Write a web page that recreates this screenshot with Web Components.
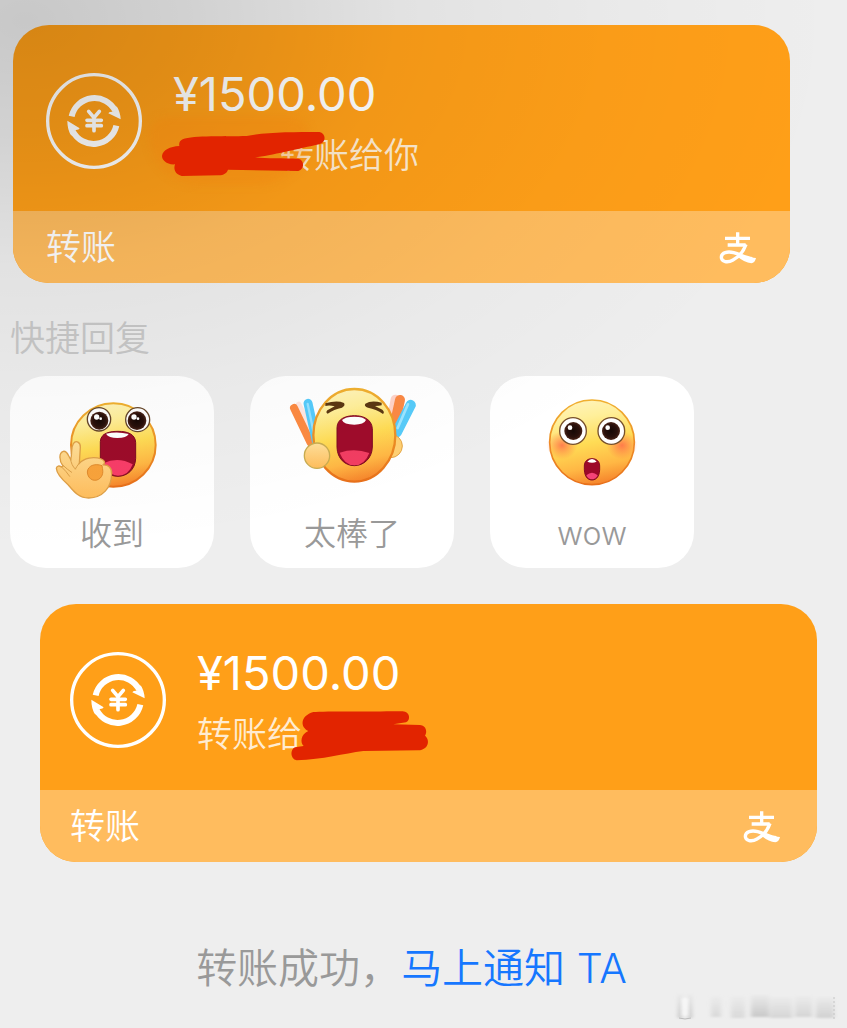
<!DOCTYPE html>
<html lang="zh-CN">
<head>
<meta charset="utf-8">
<meta name="viewport" content="width=device-width, initial-scale=1">
<title>转账</title>
<style>
body {
  margin: 0;
  background-color: #eee;
  font-family: Inter, "Noto Sans CJK SC", sans-serif;
}
</style>
</head>
<body>
<chat-page>
  <transfer-card amount="¥1500.00"><ink-mark shape="long"></ink-mark>转账给你</transfer-card>
  <quick-replies heading="快捷回复">
    <reply-option face="ok">收到</reply-option>
    <reply-option face="cheer">太棒了</reply-option>
    <reply-option face="wow">wow</reply-option>
  </quick-replies>
  <transfer-card sent amount="¥1500.00">转账给<ink-mark shape="short"></ink-mark></transfer-card>
  <transfer-notice action="马上通知 TA">转账成功，</transfer-notice>
</chat-page>

<script>
function makeTemplate(html) {
  const template = document.createElement("template");
  template.innerHTML = html;
  return template;
}

const pageTemplate = makeTemplate(`
<style>
:host {
  display: block;
  position: relative;
  box-sizing: border-box;
  min-height: 100vh;
  overflow: hidden;
}
main {
  display: flex;
  flex-direction: column;
  padding: 25px 0 30px;
}
/* soft shadow falling over the top left corner */
#shade {
  position: absolute;
  inset: 0;
  pointer-events: none;
  background: radial-gradient(ellipse 96% 52% at 3% 2%, rgba(0, 0, 0, .16), rgba(0, 0, 0, .12) 20%, rgba(0, 0, 0, .05) 46%, rgba(0, 0, 0, .02) 72%, transparent);
}
#smudge {
  position: absolute;
  right: 4px;
  bottom: 6px;
  pointer-events: none;
}
</style>
<main><slot></slot></main>
<div id="shade"></div>
<svg id="smudge" width="172" height="30" viewBox="0 0 172 30" aria-hidden="true">
  <defs>
    <filter id="soft" x="-20%" y="-20%" width="140%" height="140%"><feGaussianBlur stdDeviation="2 1"/></filter>
    <linearGradient id="down" x1="0" y1="0" x2="0" y2="1">
      <stop offset="0" stop-color="#c4c4c4" stop-opacity=".1"/>
      <stop offset="1" stop-color="#c4c4c4"/>
    </linearGradient>
  </defs>
  <g filter="url(#soft)" fill="url(#down)">
    <rect x="7" y="2" width="4" height="24"/>
    <rect x="17" y="2" width="4" height="24"/>
    <rect x="40" y="4" width="10" height="21" opacity=".5"/>
    <rect x="60" y="4" width="14" height="22" opacity=".5"/>
    <rect x="80" y="3" width="18" height="22" opacity=".9"/>
    <rect x="99" y="5" width="22" height="21" opacity=".6"/>
    <rect x="124" y="4" width="17" height="21" opacity=".6"/>
    <rect x="145" y="5" width="18" height="21" opacity=".7"/>
  </g>
  <path d="M8 26q6 2 12 0" stroke="#bbb" fill="none"/>
  <path d="M11 6h6v18h-6z" fill="#fff" opacity=".7" filter="url(#soft)"/>
  <path d="M163 5v22" stroke="#c4c4c4" stroke-dasharray="2 2"/>
</svg>
`);

class ChatPage extends HTMLElement {
  constructor() {
    super();
    this.attachShadow({ mode: "open" }).appendChild(pageTemplate.content.cloneNode(true));
  }
}

const cardTemplate = makeTemplate(`
<style>
:host {
  --start: 33px;
  --end: 33px;
  display: block;
  margin: 0 57px 0 13px;
  border-radius: 36px;
  overflow: hidden;
  background-color: #ff9f18;
  color: #fff;
}
:host([sent]) {
  --start: 30px;
  --end: 36px;
  margin: 36px 30px 0 40px;
}
#main {
  display: flex;
  align-items: flex-start;
  gap: 31px;
  padding: 40px var(--end) 34px var(--start);
}
#coin {
  flex: none;
  margin-top: 8px;
}
#amount {
  font-size: 47px;
  line-height: 58px;
}
#note {
  display: flex;
  margin-top: 10px;
  font-size: 35px;
  line-height: 44px;
  font-weight: 350;
  color: #ffecd1;
  white-space: nowrap;
}
#foot {
  display: flex;
  align-items: center;
  justify-content: space-between;
  padding: 0 var(--end) 0 var(--start);
  background-color: #ffbc5e;
  font-size: 35px;
  font-weight: 350;
  line-height: 72px;
}
#foot svg {
  margin-top: 2px;
}
</style>
<div id="main">
  <svg id="coin" width="96" height="96" viewBox="90 36 288 288" fill="none" stroke="#fff" aria-hidden="true">
    <circle cx="234" cy="180" r="139" stroke-width="10"/>
    <path d="M167 166A70 70 0 0 1 298 150" stroke-width="18"/>
    <path d="M301 194A70 70 0 0 1 170 210" stroke-width="18"/>
    <path d="M302 136Q313 153 314 175L277 157Q279 151 291 153Z" fill="#fff" stroke="none"/>
    <path d="M166 224Q154 207 154 179L191 202Q189 208 177 207Z" fill="#fff" stroke="none"/>
    <path d="M218 151L234 170L250 151M213 178H256M213 194H256M234 170V209" stroke-width="11" stroke-linecap="round"/>
  </svg>
  <div>
    <div id="amount"></div>
    <div id="note"><slot></slot></div>
  </div>
</div>
<div id="foot">
  <span>转账</span>
  <svg width="38" height="34" viewBox="90 62 114 102" fill="none" stroke="#fff" role="img" aria-label="支付宝">
    <path d="M108 84H183M146 66V103M116 104H170" stroke-width="10"/>
    <path d="M171 102C164 122 149 140 132 149C116 158 97 155 97 141C97 127 115 122 134 127C154 132 171 143 190 145" stroke-width="10"/>
    <path d="M150 131Q172 142 201 143Q198 157 187 159Q166 157 144 138Z" fill="#fff" stroke="none"/>
  </svg>
</div>
`);

class TransferCard extends HTMLElement {
  constructor() {
    super();
    const shadow = this.attachShadow({ mode: "open" });
    shadow.appendChild(cardTemplate.content.cloneNode(true));
    this.amountEl = shadow.getElementById("amount");
  }

  attributeChangedCallback(name, oldVal, newVal) {
    this.amountEl.textContent = newVal;
  }

  static get observedAttributes() {
    return ["amount"];
  }
}

// hand-drawn strokes hiding a name
const inks = {
  long: `<svg width="165" height="46" viewBox="483 363 495 138">
    <path d="M548 388C580 375 680 380 740 378C800 366 880 366 958 366C978 370 980 396 958 403C900 415 810 438 765 442C800 446 850 445 895 446C914 450 914 478 895 483L684 479C680 490 672 495 655 496L545 498C525 492 520 478 525 463C500 465 486 450 486 438C488 420 510 410 538 408C536 398 540 392 548 388Z"/>
  </svg>`,
  short: `<svg width="140" height="51" viewBox="330 207 420 153">
    <path d="M400 213C430 210 600 212 668 211C690 212 693 238 678 244L640 250L720 252C740 254 742 275 735 284C750 296 748 325 715 328L550 330C490 338 430 355 350 358C330 354 330 325 345 319L371 315C360 305 362 280 385 270C360 258 360 225 400 213Z"/>
  </svg>`
};

class InkMark extends HTMLElement {
  constructor() {
    super();
    this.attachShadow({ mode: "open" });
  }

  connectedCallback() {
    this.shadowRoot.innerHTML = `
    <style>
    :host {
      position: relative;
      z-index: 1;
      display: block;
      width: 106px;
      height: 44px;
    }
    svg {
      position: absolute;
      left: -12px;
      top: -2px;
      fill: #e22400;
    }
    :host([shape="long"])::before {
      content: "";
      position: absolute;
      inset: -16px -30px -8px -24px;
      border-radius: 20px 20px 60px 60px;
      background-color: rgba(240, 125, 10, .22);
      filter: blur(4px);
    }
    </style>
    ${inks[this.getAttribute("shape")]}`;
  }
}

const repliesTemplate = makeTemplate(`
<style>
:host {
  display: block;
  margin: 30px 10px 0;
}
h2 {
  margin: 0 0 13px;
  font-size: 35px;
  line-height: 50px;
  font-weight: 350;
  color: #c8c8c8;
}
#list {
  display: flex;
  gap: 36px;
}
</style>
<h2></h2>
<div id="list"><slot></slot></div>
`);

class QuickReplies extends HTMLElement {
  constructor() {
    super();
    const shadow = this.attachShadow({ mode: "open" });
    shadow.appendChild(repliesTemplate.content.cloneNode(true));
    this.headingEl = shadow.querySelector("h2");
  }

  attributeChangedCallback(name, oldVal, newVal) {
    this.headingEl.textContent = newVal;
  }

  static get observedAttributes() {
    return ["heading"];
  }
}

const defs = `
<defs>
  <linearGradient id="skin" x1=".4" y1="0" x2=".6" y2="1">
    <stop offset="0" stop-color="#fff3b8"/>
    <stop offset=".2" stop-color="#ffef9a"/>
    <stop offset=".5" stop-color="#ffdc55"/>
    <stop offset=".78" stop-color="#ffb744"/>
    <stop offset="1" stop-color="#f5812a"/>
  </linearGradient>
  <linearGradient id="rim" x1="0" y1="0" x2="0" y2="1">
    <stop offset="0" stop-color="#f0b030"/>
    <stop offset="1" stop-color="#e8701a"/>
  </linearGradient>
  <linearGradient id="hand" x1="0" y1="0" x2="0" y2="1">
    <stop offset="0" stop-color="#ffe09a"/>
    <stop offset="1" stop-color="#ffbd5c"/>
  </linearGradient>
  <radialGradient id="blush">
    <stop offset="0" stop-color="#ff6048" stop-opacity=".75"/>
    <stop offset="1" stop-color="#ff7048" stop-opacity="0"/>
  </radialGradient>
  <radialGradient id="iris">
    <stop offset="0" stop-color="#160805"/>
    <stop offset=".7" stop-color="#2a100b"/>
    <stop offset="1" stop-color="#4a2418"/>
  </radialGradient>
</defs>`;

const faces = {
  ok: `
  <ellipse cx="340" cy="225" rx="127" ry="125" fill="url(#skin)" stroke="url(#rim)" stroke-width="6"/>
  <g fill="#fff" stroke="#67472a" stroke-width="4">
    <circle cx="297" cy="148" r="35"/><circle cx="413" cy="149" r="36"/>
  </g>
  <g fill="url(#iris)"><circle cx="298" cy="152" r="27"/><circle cx="411" cy="152" r="28"/></g>
  <g fill="#fff">
    <circle cx="290" cy="141" r="8"/><circle cx="302" cy="146" r="4"/>
    <circle cx="402" cy="141" r="8"/><circle cx="414" cy="146" r="4"/>
  </g>
  <path d="M301 215C302 188 332 184 354 184C382 184 406 192 407 218V265C406 300 380 319 354 319C328 319 301 302 301 270Z" fill="#9d0c2a" stroke="#7d0a20" stroke-width="3"/>
  <path d="M310 280Q354 258 398 283Q386 317 354 317Q324 315 310 280Z" fill="#f83d68"/>
  <path d="M318 191Q352 183 386 192Q380 204 352 204Q326 204 318 191Z" fill="#fff"/>
  <path d="M220 221C228 209 242 217 241 232L238 280C252 264 280 258 304 267C315 272 317 280 308 285C325 283 336 294 335 312C334 354 308 383 266 384C236 384 221 364 205 345C190 332 170 312 169 295C170 287 178 286 184 291L189 288C177 272 176 248 190 244C202 242 204 256 212 268C218 248 211 235 220 221Z" fill="url(#hand)" stroke="#dfa047" stroke-width="4"/>
  <path d="M184 290Q199 304 209 319M189 286Q204 300 215 307M212 267Q213 285 226 297M238 279Q229 291 226 297" stroke="#dba04a" stroke-width="3" fill="none" stroke-linecap="round"/>
  <path d="M306 287C285 279 263 287 262 306C263 330 287 338 301 324C312 312 308 298 306 287Z" fill="#f9a33b" stroke="#e08a2c" stroke-width="3"/>`,
  cheer: `
  <g stroke-linecap="round">
    <path d="M176 103L222 192" stroke="#ffd8cf" stroke-width="16" opacity=".6"/>
    <path d="M162 114L212 218" stroke="#fc8a42" stroke-width="24"/>
    <path d="M204 100L229 213" stroke="#55cbfb" stroke-width="27"/>
    <path d="M203 102L225 206" stroke="#96e1ff" stroke-width="7"/>
    <path d="M466 88L452 160" stroke="#ffc5b8" stroke-width="28" opacity=".75"/>
    <path d="M480 90L460 180" stroke="#fb8945" stroke-width="30"/>
    <path d="M512 105L470 187" stroke="#57cbf9" stroke-width="31"/>
    <path d="M504 103L473 174" stroke="#9ce5ff" stroke-width="8"/>
  </g>
  <circle cx="452" cy="228" r="35" fill="#ffd073" stroke="#e4a546" stroke-width="3"/>
  <ellipse cx="343" cy="196" rx="123" ry="139" fill="url(#skin)" stroke="url(#rim)" stroke-width="7"/>
  <path d="M256 100Q291 90 312 99Q317 107 306 113Q282 117 263 131Q256 128 262 121L284 109Q268 105 256 108Z" fill="#5b3712"/>
  <path d="M425 98Q394 89 376 101Q371 109 384 113Q408 117 429 132Q435 126 427 119L405 108Q418 108 425 106Z" fill="#5b3712"/>
  <path d="M291 174C291 146 318 137 343 137C371 137 395 148 397 176V231C396 266 370 287 343 287C315 287 292 266 291 232Z" fill="#9f0c2b" stroke="#7d0a21" stroke-width="3"/>
  <path d="M299 248Q343 233 388 249Q374 286 343 286Q313 285 299 248Z" fill="#f23d62"/>
  <path d="M306 150Q316 140 343 140Q371 140 378 150Q372 164 343 164Q311 164 306 150Z" fill="#fff"/>
  <circle cx="231" cy="257" r="38" fill="url(#hand)" stroke="#c9ac51" stroke-width="4"/>`,
  wow: `
  <circle cx="336" cy="217" r="127" fill="url(#skin)" stroke="url(#rim)" stroke-width="5"/>
  <ellipse cx="246" cy="226" rx="46" ry="42" fill="url(#blush)"/>
  <ellipse cx="426" cy="226" rx="46" ry="42" fill="url(#blush)"/>
  <g fill="#fff" stroke="#77502b" stroke-width="4">
    <circle cx="279" cy="183" r="40"/><circle cx="394" cy="183" r="40"/>
  </g>
  <g fill="url(#iris)"><circle cx="280" cy="183" r="27"/><circle cx="393" cy="183" r="27"/></g>
  <g fill="#fff"><circle cx="270" cy="173" r="7"/><circle cx="383" cy="173" r="7"/></g>
  <path d="M313 291C312 273 323 266 336 266C349 266 360 273 359 291C360 315 352 330 336 330C320 330 312 315 313 291Z" fill="#9d0829" stroke="#850b20" stroke-width="3"/>
  <path d="M319 316Q336 301 353 316Q348 328 336 328Q324 328 319 316Z" fill="#f54378"/>
  <path d="M322 275Q328 267 336 267Q344 267 350 275Q336 281 322 275Z" fill="#fff"/>`
};

class ReplyOption extends HTMLElement {
  constructor() {
    super();
    this.attachShadow({ mode: "open" });
  }

  connectedCallback() {
    this.shadowRoot.innerHTML = `
    <style>
    :host {
      display: block;
      flex: 0 1 204px;
    }
    button {
      display: flex;
      flex-direction: column;
      align-items: center;
      width: 100%;
      padding: 0 0 8px;
      border: 0;
      border-radius: 36px;
      background-color: #fff;
      font: inherit;
      font-size: 32px;
      font-weight: 350;
      line-height: 52px;
      color: #999;
      cursor: pointer;
    }
    svg {
      display: block;
      width: 100%;
      height: 132px;
    }
    </style>
    <button type="button">
      <svg viewBox="30 18 612 396" aria-hidden="true">${defs}${faces[this.getAttribute("face")]}</svg>
      <span><slot></slot></span>
    </button>`;
  }
}

const noticeTemplate = makeTemplate(`
<style>
:host {
  display: block;
  margin: 76px 24px 0 0;
  text-align: center;
  font-size: 41px;
  line-height: 60px;
  font-weight: 350;
  color: #999;
}
a {
  color: #1677ff;
  text-decoration: none;
}
</style>
<slot></slot><a href="#"></a>
`);

class TransferNotice extends HTMLElement {
  constructor() {
    super();
    const shadow = this.attachShadow({ mode: "open" });
    shadow.appendChild(noticeTemplate.content.cloneNode(true));
    this.linkEl = shadow.querySelector("a");
  }

  attributeChangedCallback(name, oldVal, newVal) {
    this.linkEl.textContent = newVal;
  }

  static get observedAttributes() {
    return ["action"];
  }
}

customElements.define("chat-page", ChatPage);
customElements.define("transfer-card", TransferCard);
customElements.define("ink-mark", InkMark);
customElements.define("quick-replies", QuickReplies);
customElements.define("reply-option", ReplyOption);
customElements.define("transfer-notice", TransferNotice);
</script>
</body>
</html>
